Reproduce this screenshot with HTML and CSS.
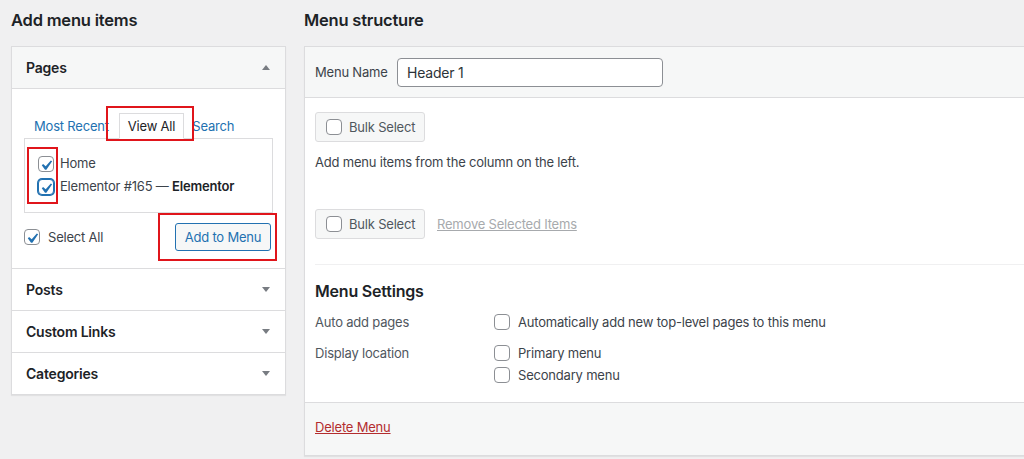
FILE: index.html
```html
<!DOCTYPE html>
<html>
<head>
<meta charset="utf-8">
<link rel="stylesheet" href="styles.css">
</head>
<body>
<div class="page">
  <div class="col-left">
    <h2 class="title">Add menu items</h2>
    <div class="acc">
      <div class="acc-head acc-open"><span>Pages</span><span class="arrow-up"></span></div>
      <div class="acc-body">
        <div class="tabs">
          <a class="tab-link">Most Recent</a>
          <span class="tab-active">View All<span class="redbox rb-tab"></span></span>
          <a class="tab-link tab-search">Search</a>
        </div>
        <div class="tab-panel">
          <span class="redbox rb-checks"></span>
          <div class="item"><span class="cb"><svg viewBox="3 1.5 14 14" width="14" height="14"><path d="M14.83 4.89l1.34.94-5.81 8.38H9.02L5.78 9.67l1.34-1.250 2.57 2.4z" fill="#2271b1"/></svg></span><span>Home</span></div>
          <div class="item"><span class="cb cb-focus"><svg viewBox="3 1.5 14 14" width="14" height="14"><path d="M14.83 4.89l1.34.94-5.81 8.38H9.02L5.78 9.67l1.34-1.25 2.57 2.4z" fill="#2271b1"/></svg></span><span>Elementor #165 — <b>Elementor</b></span></div>
        </div>
        <div class="actions">
          <div class="item"><span class="cb"><svg viewBox="3 1.5 14 14" width="14" height="14"><path d="M14.83 4.89l1.34.94-5.81 8.38H9.02L5.78 9.67l1.34-1.25 2.57 2.4z" fill="#2271b1"/></svg></span><span>Select All</span></div>
          <span class="btn-add">Add to Menu<span class="redbox rb-btn"></span></span>
        </div>
      </div>
      <div class="acc-head"><span>Posts</span><span class="arrow-down"></span></div>
      <div class="acc-head"><span>Custom Links</span><span class="arrow-down"></span></div>
      <div class="acc-head acc-last"><span>Categories</span><span class="arrow-down"></span></div>
    </div>
  </div>
  <div class="col-right">
    <h2 class="title">Menu structure</h2>
    <div class="menu-panel">
      <div class="mp-head">
        <label class="mp-label">Menu Name</label>
        <div class="mp-input">Header 1</div>
      </div>
      <div class="mp-body">
        <span class="bulk"><span class="cb cb-plain"></span>Bulk Select</span>
        <p class="hint">Add menu items from the column on the left.</p>
        <div class="bulk-row">
          <span class="bulk"><span class="cb cb-plain"></span>Bulk Select</span>
          <a class="remove">Remove Selected Items</a>
        </div>
        <div class="divider"></div>
        <h3 class="settings-title">Menu Settings</h3>
        <div class="set-row">
          <div class="set-label">Auto add pages</div>
          <div class="set-ctrl">
            <div class="opt"><span class="cb cb-plain"></span>Automatically add new top-level pages to this menu</div>
          </div>
        </div>
        <div class="set-row set-row2">
          <div class="set-label">Display location</div>
          <div class="set-ctrl">
            <div class="opt"><span class="cb cb-plain"></span>Primary menu</div>
            <div class="opt"><span class="cb cb-plain"></span>Secondary menu</div>
          </div>
        </div>
      </div>
      <div class="mp-foot">
        <a class="delete">Delete Menu</a>
      </div>
    </div>
  </div>
</div>
</body>
</html>
```

FILE: styles.css
```css
* { box-sizing: border-box; }
html, body { margin: 0; padding: 0; }
body {
  background: #f0f0f1;
  font-family: Inter, "Noto Sans", "Liberation Sans", sans-serif;
  font-size: 13px;
  letter-spacing: -0.2px;
  color: #3c434a;
  overflow: hidden;
  width: 1024px;
  height: 459px;
}
.page {
  display: flex;
  gap: 18px;
  padding-left: 11px;
}
.col-left { width: 275px; flex: none; }
.col-right { width: 760px; flex: none; }
.title {
  margin: 0;
  height: 46px;
  line-height: 40px;
  font-size: 16.5px;
  font-weight: 600;
  color: #1d2327;
}
.acc {
  background: #fff;
  border: 1px solid #dcdcde;
  box-shadow: 0 1px 1px rgba(0,0,0,.06);
}
.acc-head {
  height: 42px;
  border-bottom: 1px solid #dcdcde;
  display: flex;
  align-items: center;
  justify-content: space-between;
  padding: 0 15px 0 14px;
  font-size: 14px;
  font-weight: 600;
  color: #1d2327;
}
.acc-open { background: #f6f7f7; height: 42px; }
.acc-last { border-bottom: 0; height: 41px; }
.arrow-down, .arrow-up {
  width: 0; height: 0;
  border-left: 4px solid transparent;
  border-right: 4px solid transparent;
}
.arrow-down { border-top: 5px solid #787c82; }
.arrow-up { border-bottom: 5px solid #787c82; }
.acc-body {
  padding: 24px 12px 17px 12px;
  border-bottom: 1px solid #dcdcde;
}
.tabs {
  display: flex;
  align-items: flex-end;
  height: 25px;
  position: relative;
  z-index: 1;
}
.tab-link {
  color: #2271b1;
  padding: 0 10px 1px 10px;
  line-height: 22px;
}
.tab-search { padding-left: 8px; }
.tab-active {
  position: relative;
  border: 1px solid #dcdcde;
  border-bottom: 1px solid #fff;
  background: #fff;
  height: 26px;
  line-height: 25px;
  padding: 0 8px;
  margin-bottom: -1px;
  color: #1d2327;
}
.redbox {
  position: absolute;
  border: 2px solid #e0151b;
  pointer-events: none;
}
.rb-tab { left: -14px; top: -8px; right: -11px; bottom: -3px; }
.tab-panel {
  position: relative;
  border: 1px solid #dcdcde;
  padding: 13px 13px 14px 13px;
}
.rb-checks { left: 2px; top: 8px; width: 31px; height: 57px; }
.item {
  display: flex;
  align-items: center;
  gap: 6px;
  line-height: 23px;
  color: #3c434a;
}
.item b { color: #1d2327; font-weight: 600; }
.cb {
  width: 16px; height: 16px;
  border: 1px solid #8c8f94;
  border-radius: 4px;
  background: #fff;
  display: inline-flex;
  align-items: center;
  justify-content: center;
  flex: none;
}
.cb-focus {
  border-color: #2271b1;
  box-shadow: 0 0 0 1px #2271b1;
}
.actions {
  display: flex;
  align-items: center;
  justify-content: space-between;
  margin-top: 10px;
  padding-right: 2px;
}
.actions .item { gap: 8px; }
.btn-add {
  position: relative;
  width: 96px;
  height: 28px;
  border: 1px solid #2271b1;
  border-radius: 3px;
  background: #f6f7f7;
  color: #2271b1;
  display: flex;
  align-items: center;
  justify-content: center;
}
.rb-btn { left: -18px; top: -11px; right: -7px; bottom: -11px; }

.menu-panel {
  background: #fff;
  border: 1px solid #dcdcde;
  border-right: 0;
  box-shadow: 0 1px 1px rgba(0,0,0,.06);
}
.mp-head {
  background: #f6f7f7;
  height: 51px;
  border-bottom: 1px solid #dcdcde;
  display: flex;
  align-items: center;
  padding: 0 10px;
}
.mp-label { width: 82px; color: #3c434a; }
.mp-input {
  width: 266px;
  height: 29px;
  border: 1px solid #8c8f94;
  border-radius: 4px;
  background: #fff;
  padding: 0 9px;
  line-height: 27px;
  font-size: 14px;
  color: #2c3338;
}
.mp-body {
  padding: 14px 0 16px 10px;
}
.bulk {
  display: inline-flex;
  align-items: center;
  gap: 7px;
  width: 110px;
  height: 30px;
  padding-left: 10px;
  background: #f6f7f7;
  border: 1px solid #dcdcde;
  border-radius: 3px;
  color: #50575e;
}
.hint {
  margin: 10px 0 0 0;
  line-height: 20px;
}
.bulk-row {
  display: flex;
  align-items: center;
  gap: 12px;
  margin-top: 37px;
}
.remove {
  color: #a7aaad;
  text-decoration: underline;
}
.divider {
  margin-top: 25px;
  height: 1px;
  background: #f0f0f1;
}
.settings-title {
  margin: 14px 0 0 0;
  font-size: 16px;
  line-height: 24px;
  font-weight: 600;
  color: #1d2327;
}
.set-row {
  display: flex;
  margin-top: 8px;
}
.set-row2 { margin-top: 9px; }
.set-label { width: 179px; line-height: 22px; color: #50575e; }
.set-ctrl { display: flex; flex-direction: column; }
.opt {
  display: flex;
  align-items: center;
  gap: 8px;
  line-height: 22px;
  color: #3c434a;
}
.mp-foot {
  background: #f6f7f7;
  border-top: 1px solid #dcdcde;
  padding: 14px 10px 18px 10px;
  line-height: 20px;
}
.delete {
  color: #b32d2e;
  text-decoration: underline;
}
```
